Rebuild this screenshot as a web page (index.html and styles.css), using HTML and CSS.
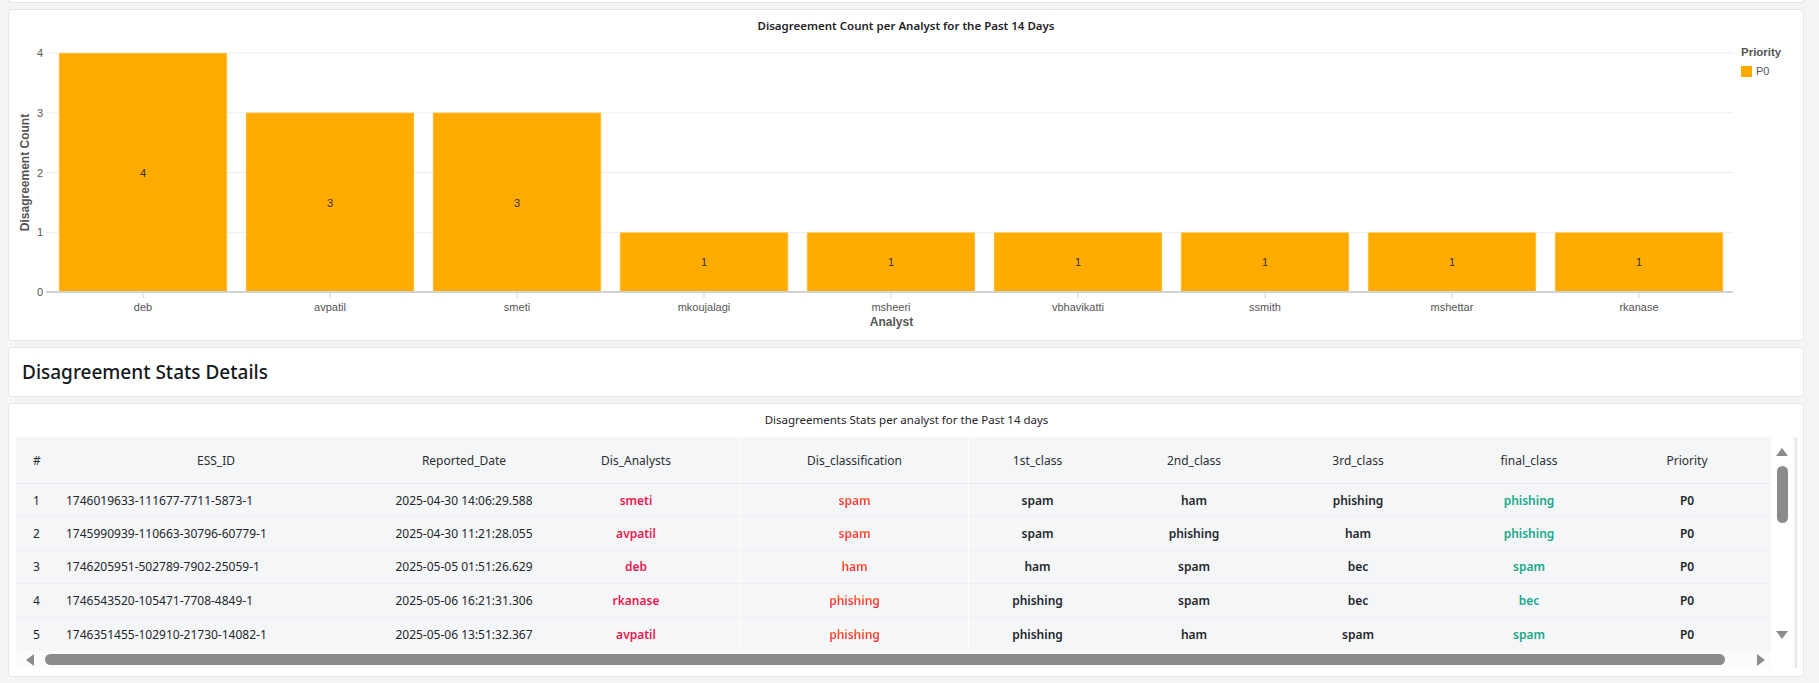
FILE: index.html
```html
<!DOCTYPE html>
<html lang="en">
<head>
<meta charset="utf-8">
<title>Disagreement Stats</title>
<link rel="stylesheet" href="styles.css">
</head>
<body>
<div class="page">
  <div class="card stub"></div>

  <section class="card chart-card">
    <svg class="chart" width="1794" height="330" viewBox="9 10 1794 330" xmlns="http://www.w3.org/2000/svg">
      <text class="chart-title" x="906" y="30" text-anchor="middle">Disagreement Count per Analyst for the Past 14 Days</text>

      <g class="grid">
        <line x1="46" y1="53" x2="1733" y2="53"/>
        <line x1="46" y1="112.75" x2="1733" y2="112.75"/>
        <line x1="46" y1="172.5" x2="1733" y2="172.5"/>
        <line x1="46" y1="232.25" x2="1733" y2="232.25"/>
      </g>

      <g class="ylabels">
        <text x="43" y="296">0</text>
        <text x="43" y="236">1</text>
        <text x="43" y="176.5">2</text>
        <text x="43" y="116.5">3</text>
        <text x="43" y="57">4</text>
      </g>
      <text class="axis-title" transform="translate(29 172.5) rotate(-90)" text-anchor="middle">Disagreement Count</text>

      <g class="bars">
        <rect x="59" y="53" width="168" height="239"/>
        <rect x="246" y="112.75" width="168" height="179.25"/>
        <rect x="433" y="112.75" width="168" height="179.25"/>
        <rect x="620" y="232.25" width="168" height="59.75"/>
        <rect x="807" y="232.25" width="168" height="59.75"/>
        <rect x="994" y="232.25" width="168" height="59.75"/>
        <rect x="1181" y="232.25" width="168" height="59.75"/>
        <rect x="1368" y="232.25" width="168" height="59.75"/>
        <rect x="1555" y="232.25" width="168" height="59.75"/>
      </g>

      <g class="bar-values">
        <text x="143" y="176.5">4</text>
        <text x="330" y="206.5">3</text>
        <text x="517" y="206.5">3</text>
        <text x="704" y="266">1</text>
        <text x="891" y="266">1</text>
        <text x="1078" y="266">1</text>
        <text x="1265" y="266">1</text>
        <text x="1452" y="266">1</text>
        <text x="1639" y="266">1</text>
      </g>

      <line class="domain" x1="46" y1="292" x2="1733" y2="292"/>
      <g class="xticks">
        <line x1="143" y1="293" x2="143" y2="298"/>
        <line x1="330" y1="293" x2="330" y2="298"/>
        <line x1="517" y1="293" x2="517" y2="298"/>
        <line x1="704" y1="293" x2="704" y2="298"/>
        <line x1="891" y1="293" x2="891" y2="298"/>
        <line x1="1078" y1="293" x2="1078" y2="298"/>
        <line x1="1265" y1="293" x2="1265" y2="298"/>
        <line x1="1452" y1="293" x2="1452" y2="298"/>
        <line x1="1639" y1="293" x2="1639" y2="298"/>
      </g>
      <g class="xlabels">
        <text x="143" y="311">deb</text>
        <text x="330" y="311">avpatil</text>
        <text x="517" y="311">smeti</text>
        <text x="704" y="311">mkoujalagi</text>
        <text x="891" y="311">msheeri</text>
        <text x="1078" y="311">vbhavikatti</text>
        <text x="1265" y="311">ssmith</text>
        <text x="1452" y="311">mshettar</text>
        <text x="1639" y="311">rkanase</text>
      </g>
      <text class="axis-title" x="891.5" y="326" text-anchor="middle">Analyst</text>

      <g class="legend">
        <text class="legend-title" x="1741" y="56">Priority</text>
        <rect x="1741" y="66" width="11" height="11"/>
        <text class="legend-label" x="1756" y="75">P0</text>
      </g>
    </svg>
  </section>

  <section class="card heading-card">
    <h2>Disagreement Stats Details</h2>
  </section>

  <section class="card table-card">
    <div class="table-title">Disagreements Stats per analyst for the Past 14 days</div>
    <div class="table-frame">
      <div class="table-viewport">
        <table class="stats">
          <colgroup>
            <col class="c-num"><col class="c-id"><col class="c-date"><col class="c-an">
            <col class="c-dis"><col class="c-1"><col class="c-2"><col class="c-3">
            <col class="c-fin"><col class="c-pri">
          </colgroup>
          <thead>
            <tr>
              <th class="num">#</th>
              <th>ESS_ID</th>
              <th>Reported_Date</th>
              <th class="an">Dis_Analysts</th>
              <th class="sep">Dis_classification</th>
              <th class="sep">1st_class</th>
              <th>2nd_class</th>
              <th>3rd_class</th>
              <th>final_class</th>
              <th class="pri">Priority</th>
            </tr>
          </thead>
          <tbody>
            <tr>
              <td class="num">1</td><td class="id">1746019633-111677-7711-5873-1</td><td class="date">2025-04-30 14:06:29.588</td>
              <td class="an"><span class="analyst">smeti</span></td><td class="sep"><span class="disclass">spam</span></td>
              <td class="sep cls">spam</td><td class="cls">ham</td><td class="cls">phishing</td><td><span class="final">phishing</span></td><td class="pri cls">P0</td>
            </tr>
            <tr>
              <td class="num">2</td><td class="id">1745990939-110663-30796-60779-1</td><td class="date">2025-04-30 11:21:28.055</td>
              <td class="an"><span class="analyst">avpatil</span></td><td class="sep"><span class="disclass">spam</span></td>
              <td class="sep cls">spam</td><td class="cls">phishing</td><td class="cls">ham</td><td><span class="final">phishing</span></td><td class="pri cls">P0</td>
            </tr>
            <tr>
              <td class="num">3</td><td class="id">1746205951-502789-7902-25059-1</td><td class="date">2025-05-05 01:51:26.629</td>
              <td class="an"><span class="analyst">deb</span></td><td class="sep"><span class="disclass">ham</span></td>
              <td class="sep cls">ham</td><td class="cls">spam</td><td class="cls">bec</td><td><span class="final">spam</span></td><td class="pri cls">P0</td>
            </tr>
            <tr>
              <td class="num">4</td><td class="id">1746543520-105471-7708-4849-1</td><td class="date">2025-05-06 16:21:31.306</td>
              <td class="an"><span class="analyst">rkanase</span></td><td class="sep"><span class="disclass">phishing</span></td>
              <td class="sep cls">phishing</td><td class="cls">spam</td><td class="cls">bec</td><td><span class="final">bec</span></td><td class="pri cls">P0</td>
            </tr>
            <tr>
              <td class="num">5</td><td class="id">1746351455-102910-21730-14082-1</td><td class="date">2025-05-06 13:51:32.367</td>
              <td class="an"><span class="analyst">avpatil</span></td><td class="sep"><span class="disclass">phishing</span></td>
              <td class="sep cls">phishing</td><td class="cls">ham</td><td class="cls">spam</td><td><span class="final">spam</span></td><td class="pri cls">P0</td>
            </tr>
          </tbody>
        </table>
      </div>
      <div class="vscroll">
        <span class="arrow up"></span>
        <span class="vthumb"></span>
        <span class="arrow down"></span>
      </div>
      <div class="hscroll">
        <span class="arrow left"></span>
        <span class="hthumb"></span>
        <span class="arrow right"></span>
      </div>
    </div>
  </section>
</div>
</body>
</html>
```

FILE: styles.css
```css
* { box-sizing: border-box; }

body {
  margin: 0;
  background: #f3f4f6;
  font-family: "Noto Sans", "Open Sans", sans-serif;
  color: #212529;
}

.page {
  display: flex;
  flex-direction: column;
  gap: 6px;
  padding: 0 15px 0 8px;
}

.card {
  background: #fff;
  border: 1px solid #e2e5e9;
  border-radius: 4px;
}

.stub {
  height: 3px;
  border-top: none;
  border-radius: 0 0 4px 4px;
}

/* ---------- chart ---------- */
.chart { display: block; }

.chart-title {
  font-family: "Noto Sans", sans-serif;
  font-size: 11.5px;
  font-weight: 600;
  fill: #1f2328;
}

.grid line { stroke: #ececec; stroke-width: 1; }
.domain { stroke: #d2d2d2; stroke-width: 2; }
.xticks line { stroke: #d0d0d0; stroke-width: 1; }

.ylabels text {
  font-family: "Liberation Sans", Arial, sans-serif;
  font-size: 11px;
  fill: #555;
  text-anchor: end;
}

.xlabels text {
  font-family: "Liberation Sans", Arial, sans-serif;
  font-size: 11px;
  fill: #555;
  text-anchor: middle;
}

.axis-title {
  font-family: "Liberation Sans", Arial, sans-serif;
  font-size: 12px;
  font-weight: 700;
  fill: #555;
}

.bars rect { fill: #ffab00; stroke: #ffe2a3; stroke-width: 0.6; }

.bar-values text {
  font-family: "Liberation Sans", Arial, sans-serif;
  font-size: 11px;
  fill: #333;
  text-anchor: middle;
}

.legend-title {
  font-family: "Liberation Sans", Arial, sans-serif;
  font-size: 11.5px;
  font-weight: 700;
  fill: #555;
}
.legend rect { fill: #ffab00; }
.legend-label {
  font-family: "Liberation Sans", Arial, sans-serif;
  font-size: 11px;
  fill: #555;
}

/* ---------- heading ---------- */
.heading-card { height: 50px; }

.heading-card h2 {
  margin: 0;
  padding-left: 13px;
  font-size: 19px;
  font-weight: 500;
  line-height: 48px;
  color: #15181c;
}

/* ---------- table ---------- */
.table-card {
  padding: 8px 6px 8px 7px;
}

.table-title {
  text-align: center;
  font-size: 11.5px;
  line-height: 16px;
  color: #1f2328;
  margin-bottom: 9px;
}

.table-frame {
  display: grid;
  grid-template-columns: 1755px 26px;
  grid-template-rows: 214px 17px;
}

.table-viewport {
  overflow: hidden;
  background: #f5f6f8;
}

.stats {
  table-layout: fixed;
  width: 1755px;
  border-collapse: separate;
  border-spacing: 0;
  font-size: 12px;
}

.c-num { width: 36px; }
.c-id { width: 328px; }
.c-date { width: 168px; }
.c-an { width: 192px; }
.c-dis { width: 228px; }
.c-1 { width: 138px; }
.c-2 { width: 176px; }
.c-3 { width: 152px; }
.c-fin { width: 190px; }
.c-pri { width: 147px; }

.stats th {
  height: 47px;
  font-weight: 400;
  font-size: 12px;
  color: #2b2f33;
  text-align: center;
  padding: 0;
  border-bottom: 1px solid #e6e8eb;
  white-space: nowrap;
}

.stats td {
  height: 33.4px;
  padding: 0;
  text-align: center;
  border-bottom: 1px solid #eceef1;
  white-space: nowrap;
  color: #23272b;
}

.stats tbody tr:last-child td { border-bottom: none; }

.stats .num { text-align: left; padding-left: 17px; }
.stats td.id { text-align: left; padding-left: 14px; }
.stats .an { padding-right: 16px; }
.stats .pri { padding-right: 21px; }
.stats .sep { border-left: 1px solid #ffffff; }
.stats .cls { font-weight: 600; }

.analyst { color: #ea1a4f; font-weight: 600; }

.disclass {
  font-weight: 600;
  background: linear-gradient(180deg, #ff8a14 0%, #ff3d2e 55%, #ff2447 100%);
  -webkit-background-clip: text;
  background-clip: text;
  color: transparent;
}

.final { color: #17a98a; font-weight: 600; }

/* ---------- scrollbars ---------- */
.vscroll {
  grid-column: 2;
  grid-row: 1 / span 2;
  background: #fff;
  box-shadow: inset -4px 0 4px -3px rgba(0, 0, 0, 0.18);
  display: flex;
  flex-direction: column;
  align-items: center;
  padding: 11px 4px 29px 0;
}

.vthumb {
  width: 11px;
  height: 57px;
  margin-top: 10px;
  border-radius: 6px;
  background: #8b8b8b;
}

.hscroll {
  grid-column: 1;
  grid-row: 2;
  background: #fbfbfc;
  display: flex;
  align-items: center;
  padding-left: 10px;
}

.hthumb {
  width: 1680px;
  height: 11px;
  margin-left: 11px;
  border-radius: 6px;
  background: #8b8b8b;
}

.arrow { display: block; width: 0; height: 0; }

.arrow.up {
  border-left: 6px solid transparent;
  border-right: 6px solid transparent;
  border-bottom: 8px solid #8c8c8c;
}

.arrow.down {
  margin-top: auto;
  border-left: 6px solid transparent;
  border-right: 6px solid transparent;
  border-top: 8px solid #8c8c8c;
}

.arrow.left {
  border-top: 6px solid transparent;
  border-bottom: 6px solid transparent;
  border-right: 8px solid #8c8c8c;
}

.arrow.right {
  margin-left: 32px;
  border-top: 6px solid transparent;
  border-bottom: 6px solid transparent;
  border-left: 8px solid #8c8c8c;
}
```
